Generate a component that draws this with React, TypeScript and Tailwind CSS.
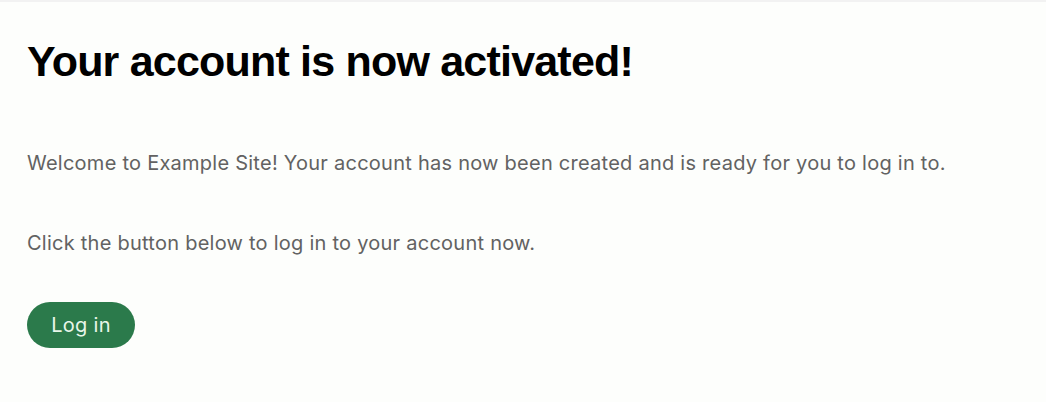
export default function App() {
  return (
    <div className="min-h-[402px] bg-[#fdfefc] border-t-2 border-[#f2f2f2]">
      <div className="px-[27px] pt-[35px] font-['Inter',sans-serif]">
        <h1 className="font-['Liberation_Sans',Arial,sans-serif] text-[43px] leading-[48px] font-bold tracking-[-0.8px] text-black">
          Your account is now activated!
        </h1>
        <p className="mt-[66px] text-[20px] leading-[24px] tracking-[0.25px] text-[#626262]">
          Welcome to Example Site! Your account has now been created and is ready for you to log in to.
        </p>
        <p className="mt-[56px] text-[20px] leading-[24px] tracking-[0.25px] text-[#626262]">
          Click the button below to log in to your account now.
        </p>
        <button className="mt-[47px] h-[46px] w-[108px] rounded-full bg-[#2b7a4b] text-[20px] tracking-[0.3px] text-[#e8f6ea]">
          Log in
        </button>
      </div>
    </div>
  )
}
